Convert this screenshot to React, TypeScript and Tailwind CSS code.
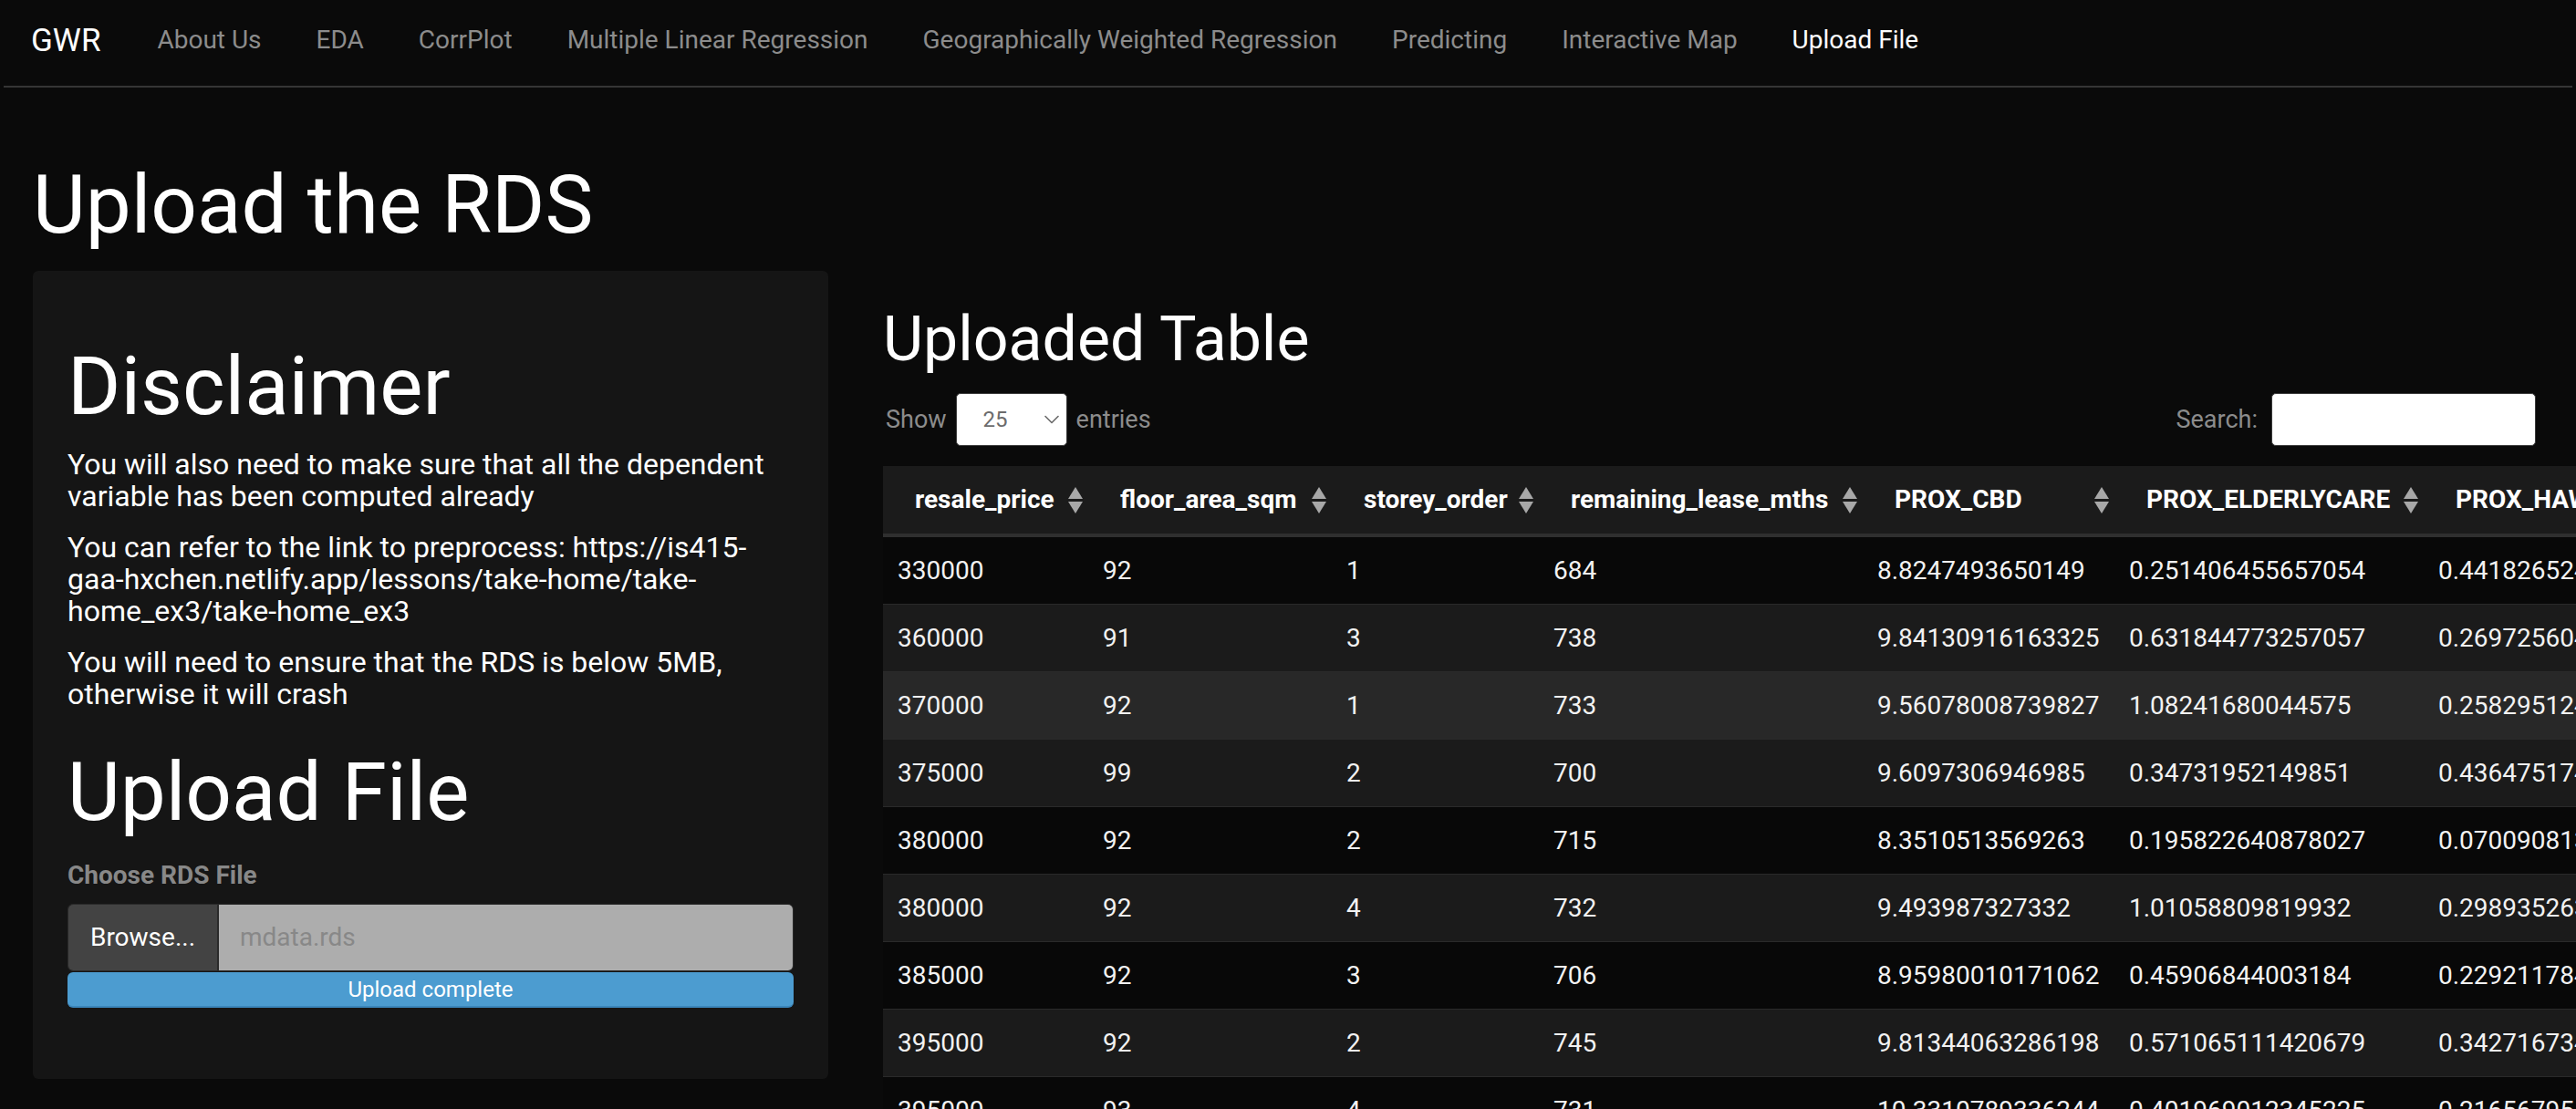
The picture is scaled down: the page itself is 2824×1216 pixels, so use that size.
import React from "react";

const navLinks = [
  "About Us",
  "EDA",
  "CorrPlot",
  "Multiple Linear Regression",
  "Geographically Weighted Regression",
  "Predicting",
  "Interactive Map",
  "Upload File",
];

const columns = [
  { key: "resale_price", cls: "w-[225px]" },
  { key: "floor_area_sqm", cls: "w-[267px]" },
  { key: "storey_order", cls: "w-[227px]" },
  { key: "remaining_lease_mths", cls: "w-[355px]" },
  { key: "PROX_CBD", cls: "w-[276px]" },
  { key: "PROX_ELDERLYCARE", cls: "w-[339px]" },
  { key: "PROX_HAWKER", cls: "w-[330px]" },
];

const rows: string[][] = [
  ["330000", "92", "1", "684", "8.8247493650149", "0.251406455657054", "0.441826524953247"],
  ["360000", "91", "3", "738", "9.84130916163325", "0.631844773257057", "0.269725604291637"],
  ["370000", "92", "1", "733", "9.56078008739827", "1.08241680044575", "0.258295124316788"],
  ["375000", "99", "2", "700", "9.6097306946985", "0.34731952149851", "0.436475174938157"],
  ["380000", "92", "2", "715", "8.3510513569263", "0.195822640878027", "0.070090813376243"],
  ["380000", "92", "4", "732", "9.493987327332", "1.01058809819932", "0.298935263041785"],
  ["385000", "92", "3", "706", "8.95980010171062", "0.45906844003184", "0.229211784502963"],
  ["395000", "92", "2", "745", "9.81344063286198", "0.571065111420679", "0.342716734859412"],
  ["395000", "93", "4", "731", "10.3310789336244", "0.401969012345225", "0.216567954231087"],
];

function SortIcon() {
  return (
    <svg width="18" height="31" viewBox="0 0 18 31" className="shrink-0">
      <polygon points="1,14 9,1 17,14" fill="#a8a8a8" />
      <polygon points="1,17 17,17 9,30" fill="#a8a8a8" />
    </svg>
  );
}

function Chevron() {
  return (
    <svg width="16" height="10" viewBox="0 0 16 10" fill="none">
      <path d="M1 1.5 L8 8.5 L15 1.5" stroke="#6a6a6a" strokeWidth="1.6" strokeLinecap="round" strokeLinejoin="round" />
    </svg>
  );
}

export default function App() {
  const rowBg = (i: number) => {
    if (i === 2) return "bg-[#282828]";
    return i % 2 === 0 ? "bg-[#080808]" : "bg-[#1b1b1b]";
  };

  return (
    <div
      className="h-screen w-full overflow-hidden bg-[#0a0a0a] text-white"
      style={{ fontFamily: "Roboto, 'Liberation Sans', sans-serif" }}
    >
      {/* Navbar */}
      <nav className="flex h-[94px] items-center pb-[6px] pl-[34px]">
        <span className="mr-[62px] text-[35px] leading-none text-white">GWR</span>
        <div className="flex items-center gap-[60px]">
          {navLinks.map((l) => (
            <span
              key={l}
              className={
                "whitespace-nowrap text-[28px] leading-none " +
                (l === "Upload File" ? "text-white" : "text-[#8c8c8c]")
              }
            >
              {l}
            </span>
          ))}
        </div>
      </nav>
      <div className="mx-[4px] h-[2px] bg-[#353535]" />

      {/* Page */}
      <div className="pl-[36px] pr-[44px]">
        <h2 className="mt-[75px] text-[89px] font-normal leading-[107px] text-white">Upload the RDS</h2>

        <div className="mt-[19px] flex items-start gap-[60px]">
          {/* Sidebar card */}
          <div className="w-[872px] shrink-0 rounded-[6px] bg-[#151515] px-[38px] pb-[78px] pt-[38px]">
            <h1 className="mt-[35px] text-[89px] font-normal leading-[107px] text-white">Disclaimer</h1>
            <div className="mt-[15px] text-[32px] leading-[35px] text-white">
              <p className="mb-[21px]">
                You will also need to make sure that all the dependent variable has been computed already
              </p>
              <p className="mb-[21px]">
                You can refer to the link to preprocess: https://is415-gaa-hxchen.netlify.app/lessons/take-home/take-home_ex3/take-home_ex3
              </p>
              <p>You will need to ensure that the RDS is below 5MB, otherwise it will crash</p>
            </div>
            <h1 className="mt-[36px] text-[89px] font-normal leading-[107px] text-white">Upload File</h1>
            <div className="mt-[21px] text-[28px] font-bold leading-[34px] text-[#888888]">Choose RDS File</div>
            <div className="mt-[14px] flex h-[74px] overflow-hidden rounded-[6px] border border-[#2a2a2a]">
              <div className="flex w-[165px] items-center justify-center border-r-2 border-[#2a2a2a] bg-[#434343] text-[28px] text-white">
                Browse...
              </div>
              <div className="flex flex-1 items-center bg-[#adadad] pl-[23px] text-[28px] text-[#888888]">
                mdata.rds
              </div>
            </div>
            <div className="mt-[1px] flex h-[39px] items-center justify-center rounded-[6px] border-b-2 border-[#3b86bb] bg-[#4c9cd0] text-[24px] text-white">
              Upload complete
            </div>
          </div>

          {/* Main */}
          <div className="min-w-0 flex-1">
            <h3 className="mt-[34px] text-[68px] font-normal leading-[82px] text-white">Uploaded Table</h3>
            <div className="mt-[18px] flex h-[58px] items-center justify-between">
              <div className="flex items-center text-[27px] text-[#8c8c8c]">
                <span className="ml-[3px]">Show</span>
                <div className="mx-[10px] flex h-[58px] w-[122px] items-center justify-between rounded-[5px] border border-[#3a3a3a] bg-white pl-[29px] pr-[8px]">
                  <span className="text-[24px] text-[#6c6c6c]">25</span>
                  <Chevron />
                </div>
                <span>entries</span>
              </div>
              <div className="flex items-center text-[27px] text-[#8c8c8c]">
                <span>Search:</span>
                <div className="ml-[15px] h-[58px] w-[290px] rounded-[5px] border border-[#3a3a3a] bg-white" />
              </div>
            </div>

            <table className="mt-[22px] w-[2019px] table-fixed border-separate border-spacing-0 text-left">
              <colgroup>
                {columns.map((c) => (
                  <col key={c.key} className={c.cls} />
                ))}
              </colgroup>
              <thead>
                <tr>
                  {columns.map((c) => (
                    <th key={c.key} className="border-b-4 border-[#2f2f2f] bg-[#1b1b1b] p-0 font-bold">
                      <div className="flex h-[74px] items-center justify-between pl-[35px] pr-[5px]">
                        <span className="whitespace-nowrap text-[28px] leading-none text-white">{c.key}</span>
                        <SortIcon />
                      </div>
                    </th>
                  ))}
                </tr>
              </thead>
              <tbody>
                {rows.map((r, i) => (
                  <tr key={i}>
                    {r.map((v, j) => (
                      <td
                        key={j}
                        className={
                          "p-0 " + (i > 0 ? "border-t border-[#2a2a2a] " : "") + rowBg(i)
                        }
                      >
                        <div className="flex h-[73px] items-center whitespace-nowrap pl-[16px] text-[28px] text-[#f2f2f2]">
                          {v}
                        </div>
                      </td>
                    ))}
                  </tr>
                ))}
              </tbody>
            </table>
          </div>
        </div>
      </div>
    </div>
  );
}
